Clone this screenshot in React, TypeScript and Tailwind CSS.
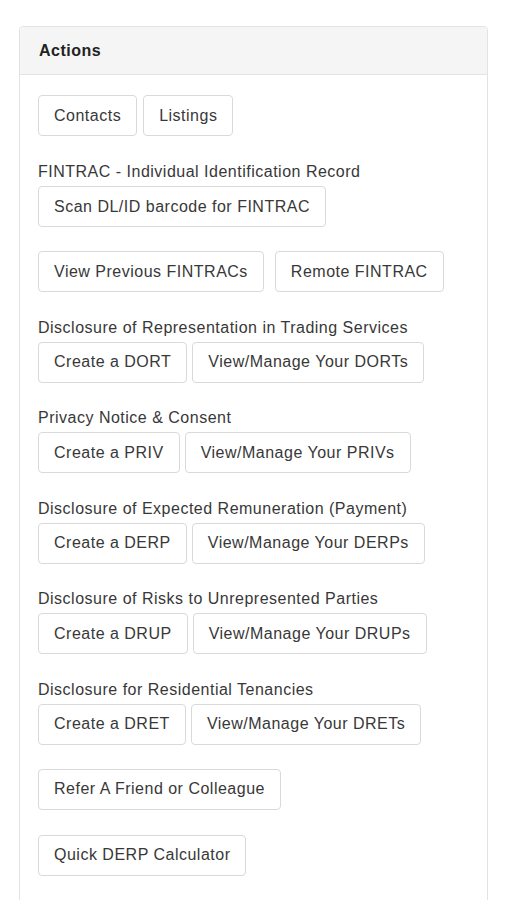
import React from 'react';

const Btn: React.FC<{ children: React.ReactNode }> = ({ children }) => (
  <button className="h-[41px] px-[15px] border border-[#d9d9d9] rounded-[4px] bg-white text-[16px] tracking-[0.5px] text-[#383838] whitespace-nowrap">
    {children}
  </button>
);

const sections = [
  {
    label: 'Disclosure of Representation in Trading Services',
    buttons: ['Create a DORT', 'View/Manage Your DORTs'],
  },
  { label: 'Privacy Notice & Consent', buttons: ['Create a PRIV', 'View/Manage Your PRIVs'] },
  {
    label: 'Disclosure of Expected Remuneration (Payment)',
    buttons: ['Create a DERP', 'View/Manage Your DERPs'],
  },
  {
    label: 'Disclosure of Risks to Unrepresented Parties',
    buttons: ['Create a DRUP', 'View/Manage Your DRUPs'],
  },
  {
    label: 'Disclosure for Residential Tenancies',
    buttons: ['Create a DRET', 'View/Manage Your DRETs'],
  },
];

export default function App() {
  return (
    <div className="w-[506px] h-[900px] overflow-hidden bg-white pt-[26px] pl-[19px] font-['Liberation_Sans',Arial,sans-serif] text-[#383838]">
      <div className="w-[469px] border border-[#e3e3e3] rounded-t-[4px] min-h-[900px]">
        {/* Header */}
        <div className="h-[48px] bg-[#f5f5f5] border-b border-[#e3e3e3] rounded-t-[4px] flex items-center px-[19px]">
          <h3 className="text-[16px] font-bold tracking-[0.5px] text-[#222]">Actions</h3>
        </div>

        <div className="px-[18px] pt-[20px]">
          <div className="flex gap-[6px]">
            <Btn>Contacts</Btn>
            <Btn>Listings</Btn>
          </div>

          <div className="mt-[26px] text-[16px] leading-[20px] tracking-[0.5px]">FINTRAC - Individual Identification Record</div>
          <div className="mt-[4px] flex">
            <Btn>Scan DL/ID barcode for FINTRAC</Btn>
          </div>
          <div className="mt-[24px] flex gap-[11px]">
            <Btn>View Previous FINTRACs</Btn>
            <Btn>Remote FINTRAC</Btn>
          </div>

          {sections.map((s) => (
            <div key={s.label} className="mt-[25.5px]">
              <div className="text-[16px] leading-[20px] tracking-[0.5px]">{s.label}</div>
              <div className="mt-[4px] flex gap-[5px]">
                {s.buttons.map((b) => (
                  <Btn key={b}>{b}</Btn>
                ))}
              </div>
            </div>
          ))}

          <div className="mt-[24px] flex">
            <Btn>Refer A Friend or Colleague</Btn>
          </div>
          <div className="mt-[25px] flex">
            <Btn>Quick DERP Calculator</Btn>
          </div>
        </div>
      </div>
    </div>
  );
}
